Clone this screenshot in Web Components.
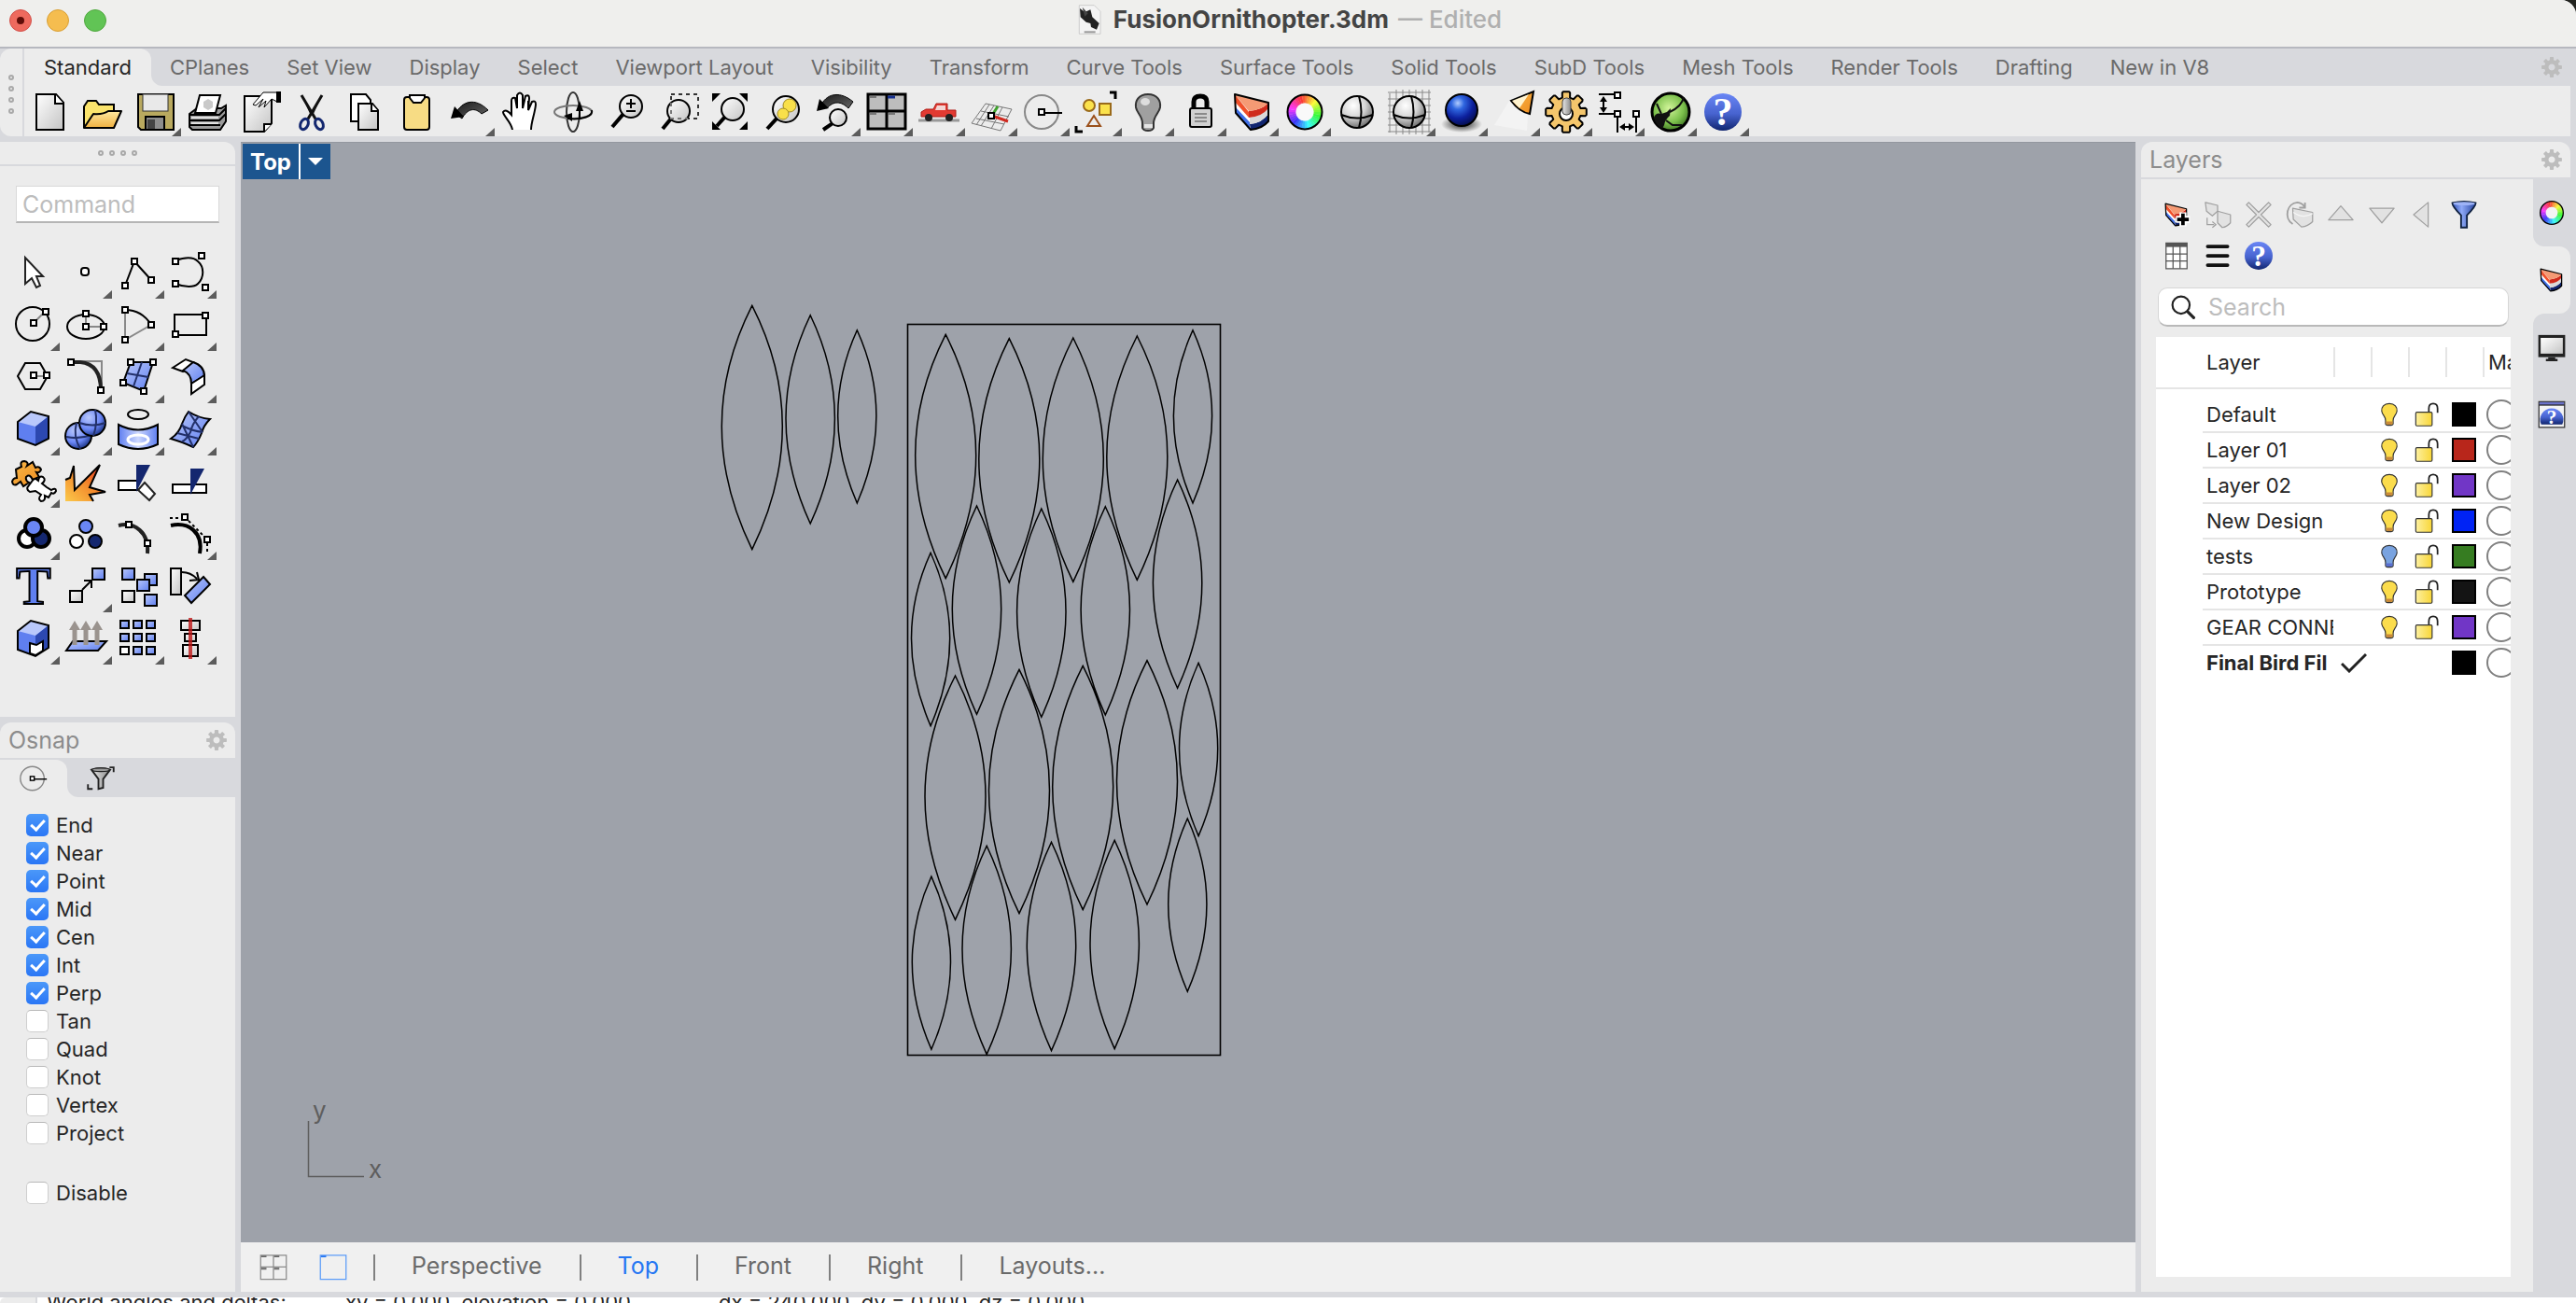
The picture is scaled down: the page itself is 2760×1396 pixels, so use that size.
<!DOCTYPE html>
<html lang="en">
<head>
<meta charset="utf-8">
<title>FusionOrnithopter.3dm</title>
<style>
    html, body {
        height: 100%;
        margin: 0;
        background: #22231f;
    }

    body {
        --chrome: #d8d9dd;
        --panel: #ececec;
        --text: #262626;
        --muted: #6a6a6a;
        --accent: #2476f3;
        font-family: Inter, "Liberation Sans", sans-serif;
        font-size: 22px;
        color: var(--text);
    }
</style>
</head>
<body>
<rhino-app></rhino-app>

<script>
// Gradients shared by all icons. Ids stay local to each shadow root.
const ICON_DEFS = `
    <defs>
        <linearGradient id="silver" x1="0" y1="0" x2="1" y2="1"><stop offset="0" stop-color="#fff"/><stop offset="1" stop-color="#c4c4c4"/></linearGradient>
        <linearGradient id="steel" x1="0" y1="0" x2="1" y2="0"><stop offset="0" stop-color="#e8e8e8"/><stop offset="1" stop-color="#8a8a8a"/></linearGradient>
        <linearGradient id="gold" x1="0" y1="0" x2="0" y2="1"><stop offset="0" stop-color="#ffe9a0"/><stop offset="1" stop-color="#efb040"/></linearGradient>
        <linearGradient id="lockGold" x1="0" y1="0" x2="1" y2="0"><stop offset="0" stop-color="#fdf0a0"/><stop offset="1" stop-color="#f8d637"/></linearGradient>
        <linearGradient id="blue" x1="0" y1="0" x2="1" y2="1"><stop offset="0" stop-color="#b9c8fb"/><stop offset="1" stop-color="#5f7ff0"/></linearGradient>
        <linearGradient id="deep" x1="0" y1="0" x2="0" y2="1"><stop offset="0" stop-color="#6a86f5"/><stop offset=".55" stop-color="#4763cf"/><stop offset="1" stop-color="#10256f"/></linearGradient>
        <linearGradient id="band" x1="0" y1="0" x2="1" y2="0"><stop offset="0" stop-color="#5f7ff0"/><stop offset=".5" stop-color="#cdd8ff"/><stop offset="1" stop-color="#5f7ff0"/></linearGradient>
        <linearGradient id="fire" x1="0" y1="1" x2="1" y2="0"><stop offset="0" stop-color="#fbc94a"/><stop offset=".5" stop-color="#f48a2c"/><stop offset="1" stop-color="#e8261c"/></linearGradient>
        <linearGradient id="orange" x1="0" y1="0" x2="1" y2="1"><stop offset="0" stop-color="#f7b84a"/><stop offset="1" stop-color="#f08c1e"/></linearGradient>
        <linearGradient id="arrow" x1="1" y1="1" x2="0" y2="0"><stop offset="0" stop-color="#666"/><stop offset="1" stop-color="#1a1a1a"/></linearGradient>
        <linearGradient id="funnel" x1="0" y1="0" x2="1" y2="0"><stop offset="0" stop-color="#2d4fb5"/><stop offset=".4" stop-color="#8ea9f7"/><stop offset="1" stop-color="#2543a0"/></linearGradient>
        <radialGradient id="ball" cx=".38" cy=".3" r=".75"><stop offset="0" stop-color="#fff"/><stop offset=".5" stop-color="#d5d5d5"/><stop offset="1" stop-color="#666"/></radialGradient>
        <radialGradient id="blueBall" cx=".36" cy=".3" r=".75"><stop offset="0" stop-color="#b9c8fb"/><stop offset=".6" stop-color="#6a86f5"/><stop offset="1" stop-color="#17307f"/></radialGradient>
        <radialGradient id="navyBall" cx=".38" cy=".28" r=".8"><stop offset="0" stop-color="#b0ccff"/><stop offset=".25" stop-color="#2f66e0"/><stop offset=".6" stop-color="#0c1f9c"/><stop offset="1" stop-color="#04093a"/></radialGradient>
        <radialGradient id="greenBall" cx=".45" cy=".4" r=".65"><stop offset="0" stop-color="#d2f59a"/><stop offset=".6" stop-color="#7cc04c"/><stop offset="1" stop-color="#356a1c"/></radialGradient>
        <radialGradient id="shadow"><stop offset="0" stop-color="#222"/><stop offset="1" stop-color="#222" stop-opacity="0"/></radialGradient>
    </defs>`;

const node = (x, y) => `<rect x="${x - 3}" y="${y - 3}" width="6" height="6" fill="#fff" stroke="#000" stroke-width="2"/>`;
const box = (x, y, w, h, fill) => `<rect x="${x}" y="${y}" width="${w}" height="${h}" fill="${fill}" stroke="#000" stroke-width="2"/>`;
const lens = (x, y, r, hx, hy) => `
    <path d="M${x - r * 0.7} ${y + r * 0.7}L${hx} ${hy}" stroke="#000" stroke-width="4"/>
    <circle cx="${x}" cy="${y}" r="${r}" fill="url(#silver)" stroke="#000" stroke-width="2"/>`;

// Hue ring drawn as short arcs
function ring(c, r, w) {
    let out = '';
    for (let i = 0; i < 36; i++) {
        const a = (i * 10 - 90) * Math.PI / 180;
        const b = (i * 10 - 79) * Math.PI / 180;
        const p = t => `${(c + r * Math.cos(t)).toFixed(2)} ${(c + r * Math.sin(t)).toFixed(2)}`;
        out += `<path d="M${p(a)}A${r} ${r} 0 0 1 ${p(b)}" stroke="hsl(${i * 10 + 20} 95% 60%)" stroke-width="${w}" fill="none"/>`;
    }
    return out + `<circle cx="${c}" cy="${c}" r="${r - w / 2}" fill="#fff" opacity=".7"/><circle cx="${c}" cy="${c}" r="${r + w / 2}" fill="none" stroke="#000" stroke-width="2"/>`;
}

const CAKE = `
    <path d="M5 5L6 25L22 43L41 34V14Z" fill="#fff"/>
    <path d="M5 18L21 35V43L6 25Z" fill="#3f6fe6"/>
    <path d="M21 37Q34 36 41 26V34Q34 42 22 43Z" fill="#10256f"/>
    <path d="M21 30Q34 28 41 20V26Q34 36 21 37Z" fill="#d9d9d9"/>
    <path d="M5 5V13L20 30V24Z" fill="#f0502a"/>
    <path d="M20 23Q34 22 41 14V20Q34 29 20 30Z" fill="#cf2b1c"/>
    <path d="M5 5L41 14Q34 22 20 23Z" fill="#f59a74"/>
    <path d="M5 5L6 25L22 43Q34 42 41 34V14Z" fill="none" stroke="#000" stroke-width="2" stroke-linejoin="round"/>`;
const QUESTION = (x, y, size) => `<text x="${x}" y="${y}" font-family="Liberation Serif, serif" font-weight="bold" font-size="${size}" text-anchor="middle" fill="#fff">?</text>`;
const GEAR_PATH = (() => {
    let d = '';
    for (let i = 0; i < 8; i++) {
        [[-0.26, 0.72], [-0.2, 0.95], [-0.14, 1], [0.14, 1], [0.2, 0.95], [0.26, 0.72]].forEach(([o, r]) => {
            const t = i * Math.PI / 4 + o;
            d += `${d ? 'L' : 'M'}${(24 + 22 * r * Math.sin(t)).toFixed(1)} ${(24 - 22 * r * Math.cos(t)).toFixed(1)}`;
        });
    }
    return d + 'Z';
})();
const BULB = (fill, base) => `
    <path d="M24 4C14 4 9 11 10 18C11 25 17 27 17 35V41Q17 44 24 44Q31 44 31 41V35C31 27 37 25 38 18C39 11 34 4 24 4Z" fill="${fill}" stroke="#333" stroke-width="2"/>
    <path d="M18 37H30V41Q29 43 24 43Q19 43 18 41Z" fill="${base}"/>`;
const GHOST = 'fill="#e2e2e2" stroke="#a0a0a0" stroke-width="2" stroke-linejoin="round"';

const ICONS = {
    // Standard toolbar
    new: `<path d="M9 5H30L38 14V43H9Z" fill="url(#silver)" stroke="#000" stroke-width="2"/><path d="M29 5V15H38" fill="#fff" stroke="#000" stroke-width="2"/>`,
    open: `<path d="M4 41V18L8 12H17L20 16H36V23" fill="#fbe46d" stroke="#000" stroke-width="2"/><path d="M4 41L14 26Q24 27 30 23H44L36 41Z" fill="url(#gold)" stroke="#000" stroke-width="2" stroke-linejoin="round"/>`,
    save: `<path d="M6 5H44V43H9L6 40Z" fill="#b9a95f" stroke="#000" stroke-width="2"/><rect x="11" y="5" width="27" height="18" fill="#e9e9e9" stroke="#333"/><rect x="14" y="29" width="20" height="14" fill="#8d8d8d" stroke="#000" stroke-width="2"/><rect x="16" y="32" width="8" height="10" fill="#444"/>`,
    print: `<path d="M5 26L13 20H39L44 17V34L38 43H8L5 40Z" fill="#9b9b9b" stroke="#000" stroke-width="2"/><path d="M16 6H38L33 25H11Z" fill="#fff" stroke="#000" stroke-width="2"/><path d="M20 13l5-3 5 3v6l-5 3-5-3z" fill="#c9c9c9"/><path d="M5 27H37L44 20M5 33H37L44 26M5 38H38" fill="none" stroke="#000" stroke-width="2"/><path d="M7 30H36M7 36H36" stroke="#e0e0e0" stroke-width="2"/>`,
    props: `<path d="M8 7H37V36L29 45H8Z" fill="url(#silver)" stroke="#000" stroke-width="2"/><path d="M29 45V37H37" fill="#fff" stroke="#000" stroke-width="2"/><path d="M43 3H28L17 16L20 17L28 10L23 19L31 12L29 19L37 10L43 13Z" fill="#fff" stroke="#000"/><path d="M42 2h5v12h-5z" fill="#000"/>`,
    cut: `<path d="M13 6L29 33M35 6L19 33" stroke="#111" stroke-width="3"/><path d="M13 6L25 25L23 28ZM35 6L23 25L25 28Z" fill="#111"/><ellipse cx="16" cy="37" rx="4" ry="6" transform="rotate(25 16 37)" fill="none" stroke="#13276f" stroke-width="3"/><ellipse cx="32" cy="37" rx="4" ry="6" transform="rotate(-25 32 37)" fill="none" stroke="#13276f" stroke-width="3"/>`,
    copy: `<path d="M10 5H26L31 11V34H10Z" fill="#fff" stroke="#000" stroke-width="2"/><path d="M18 15H33L39 22V43H18Z" fill="url(#silver)" stroke="#000" stroke-width="2"/><path d="M32 15V23H39" fill="#fff" stroke="#000" stroke-width="2"/>`,
    paste: `<rect x="11" y="8" width="27" height="35" rx="3" fill="#f7dc84" stroke="#000" stroke-width="2"/><path d="M17 6H33V9L29 14H21L17 9Z" fill="#fff" stroke="#000" stroke-width="2"/>`,
    undo: `<path d="M10 26C17 12 31 8 45 22L38 26C31 19 23 20 17 31Z" fill="url(#arrow)" stroke="#000"/><path d="M9 18L5 31L19 29Z" fill="#000"/>`,
    pan: `<path d="M15 43C14 35 5 28 5 24Q8 20 14 27V12Q14 8 18 9L20 20V6Q23 1 26 6V20L29 7Q33 5 33 9L32 22L36 13Q40 11 40 16C39 26 35 35 35 43" fill="#fff" stroke="#000" stroke-width="2"/><path d="M20 20V9M26 20V8M32 22V12" stroke="#000" stroke-width="2"/>`,
    rotate: `<ellipse cx="24" cy="24" rx="7" ry="21" fill="none" stroke="#333" stroke-width="2"/><ellipse cx="24" cy="24" rx="20" ry="7" fill="none" stroke="#777" stroke-width="2"/><path d="M18 31C34 33 46 28 44 22" fill="none" stroke="#000" stroke-width="2"/><path d="M31 32V20" stroke="#000" stroke-width="2"/><path d="M31 12L27 23H35ZM14 28L23 25V34Z" fill="#000"/>`,
    zoom: `${lens(30, 18, 12, 10, 40)}<path d="M30 10v10M25 15h10M25 23h10" stroke="#000" stroke-width="2"/>`,
    zoomwin: `<rect x="17" y="5" width="29" height="26" fill="none" stroke="#333" stroke-width="2" stroke-dasharray="4 4"/>${lens(25, 23, 12, 8, 42)}<path d="M17 14V31H35" fill="none" stroke="#777" stroke-width="2" stroke-dasharray="4 4"/>`,
    extents: `<path d="M5 4h9L5 13zM43 4v9L34 4zM5 43v-9l9 9zM43 43h-9l9-9z" fill="#000"/>${lens(27, 21, 12, 10, 39)}`,
    selected: `${lens(28, 21, 14, 8, 42)}<circle cx="32" cy="17" r="7" fill="#f9e04a" stroke="#a08a20"/><circle cx="25" cy="26" r="6" fill="#f9e04a" stroke="#a08a20"/>`,
    undoview: `<path d="M10 16C17 3 31 2 44 13L39 20C31 12 23 12 16 20Z" fill="url(#arrow)" stroke="#000"/><path d="M8 10L5 23L18 20Z" fill="#000"/>${lens(28, 30, 9, 12, 43)}`,
    fourview: `<rect x="4" y="5" width="40" height="37" fill="#bdbdbd" stroke="#000" stroke-width="3"/><path d="M24 5V42M4 23H44" stroke="#000" stroke-width="3"/><path d="M25 8h8" stroke="#17308f" stroke-width="3"/><path d="M6 8h7M6 26h7M26 26h7" stroke="#777" stroke-width="2"/>`,
    car: `<path d="M2 33H46" stroke="#999" stroke-width="3"/><path d="M5 29V24L10 21H18L21 15H33V22H42V29Z" fill="#e23a32" stroke="#b01c16"/><path d="M22 17h9v5H20z" fill="#f3d5d3"/><circle cx="13" cy="30" r="4" fill="#222"/><circle cx="35" cy="30" r="4" fill="#222"/>`,
    cplane: `<path d="M18 15L46 21M13 23L43 29M8 31L38 37M3 36L34 44M18 15L3 36M27 17L13 39M36 19L24 42M46 21L34 44M22 16L8 38" fill="none" stroke="#777"/><path d="M25 28L42 34" stroke="#d02a20" stroke-width="3"/><path d="M26 26L31 18" stroke="#3fa22d" stroke-width="3"/>${node(24, 28)}`,
    osnap: `<circle cx="22" cy="24" r="18" fill="none" stroke="#888" stroke-width="2"/><path d="M24 25H44" stroke="#000" stroke-width="2"/>${node(22, 24)}`,
    select: `<path d="M39 3h6v7M3 39v6h7" fill="none" stroke="#000" stroke-width="3"/><circle cx="17" cy="17" r="6" fill="#fbe24c" stroke="#9a6a1a" stroke-width="2"/><rect x="28" y="15" width="12" height="12" fill="#fbe24c" stroke="#9a6a1a" stroke-width="2"/><path d="M22 28L29 39H15Z" fill="none" stroke="#9a4f1a" stroke-width="2"/>`,
    bulb: `<path d="M24 5C14 5 10 12 11 19C12 25 18 28 18 36V41Q19 44 24 44Q29 44 30 41V36C30 28 36 25 37 19C38 12 34 5 24 5Z" fill="#a0a0a0" stroke="#333" stroke-width="2"/><ellipse cx="21" cy="13" rx="5" ry="4" fill="#ddd"/><path d="M20 37h9v4h-9z" fill="#e5e5e5"/>`,
    lock: `<path d="M17 21V13Q17 7 24 7Q31 7 31 13V21" fill="none" stroke="#000" stroke-width="5"/><rect x="13" y="20" width="23" height="20" rx="2" fill="#d0d0d0" stroke="#000" stroke-width="2"/><path d="M18 26H31M18 30H31M18 34H31" stroke="#8a8a8a" stroke-width="2"/>`,
    layers: CAKE,
    color: ring(24, 14, 9),
    shaded: `<circle cx="24" cy="24" r="17" fill="url(#ball)" stroke="#000" stroke-width="2"/><path d="M26 7Q31 24 26 41M7 27Q24 34 41 27" fill="none" stroke="#000" stroke-width="2"/>`,
    wires: `<path d="M3 4V46M10 0V48M17 0V48M24 0V48M31 0V48M38 0V48M45 0V46M1 3H47M1 10H47M1 17H47M1 24H47M1 31H47M1 38H47M1 45H47" stroke="#888"/><circle cx="24" cy="24" r="17" fill="url(#ball)" stroke="#000" stroke-width="2"/><path d="M26 7Q31 24 26 41M7 27Q24 34 41 27" fill="none" stroke="#000" stroke-width="2"/>`,
    render: `<ellipse cx="24" cy="37" rx="22" ry="9" fill="url(#shadow)"/><circle cx="24" cy="22" r="17" fill="url(#navyBall)" stroke="#000" stroke-width="2"/>`,
    spot: `<path d="M21 9L3 38L38 44L39 27Z" fill="#f6f6f6" opacity=".7"/><path d="M21 12L45 2L41 26Q30 24 21 12Z" fill="url(#orange)" stroke="#000" stroke-width="2"/><path d="M22 12L40 5L30 20Z" fill="#fff3cf"/>`,
    gear: `<path d="${GEAR_PATH}" fill="#f4c66c" stroke="#000" stroke-width="2" stroke-linejoin="round"/><circle cx="24" cy="26" r="7" fill="#fff" stroke="#000" stroke-width="2"/><rect x="20" y="9" width="9" height="18" rx="4" fill="url(#steel)" stroke="#444"/>`,
    dim: `<path d="M3 5H23M3 26H23M23 26V46M43 26V46" stroke="#000" stroke-width="2"/><path d="M8 9V23M27 40H39" stroke="#000" stroke-width="2"/><path d="M8 7l-4 6h8zM8 25l-4-6h8zM25 40l6-4v8zM41 40l-6-4v8z" fill="#000"/>${node(23, 6)}${node(23, 26)}${node(43, 26)}`,
    hopper: `<circle cx="24" cy="24" r="20" fill="url(#greenBall)" stroke="#000" stroke-width="3"/><path d="M6 30Q8 24 14 26L20 24L24 20L23 28Q18 32 17 38L15 42Q8 38 6 30Z" fill="#111"/><path d="M23 24Q36 18 38 8M14 26L9 15M19 33L26 38L36 38" fill="none" stroke="#111" stroke-width="2"/>`,
    help: `<circle cx="24" cy="24" r="20" fill="url(#deep)"/>${QUESTION(24, 38, 42)}`,

    // Tool palette
    pointer: `<path d="M15 8V36L22 30L27 40L31 38L27 28H34Z" fill="#fff" stroke="#222" stroke-width="2"/>`,
    point: `<rect x="19" y="19" width="8" height="8" rx="3" fill="#fff" stroke="#000" stroke-width="2"/>`,
    polyline: `<path d="M10 38L20 12L38 32" fill="none" stroke="#000" stroke-width="2"/>${node(10, 38)}${node(20, 12)}${node(38, 32)}`,
    curve: `<path d="M8 11C20 7 28 8 32 12C39 18 39 29 32 36C28 40 18 40 8 36" fill="none" stroke="#000" stroke-width="2"/>${node(8, 12)}${node(36, 6)}${node(40, 40)}${node(8, 36)}`,
    circle: `<circle cx="23" cy="23" r="18" fill="none" stroke="#000" stroke-width="2"/><path d="M24 22L36 10" stroke="#888" stroke-width="2"/>${node(24, 22)}${node(37, 10)}`,
    ellipse: `<ellipse cx="24" cy="26" rx="20" ry="13" fill="none" stroke="#000" stroke-width="2"/><path d="M24 14V26H42" fill="none" stroke="#888" stroke-width="2"/>${node(24, 12)}${node(24, 26)}${node(43, 26)}`,
    arc: `<path d="M10 8V40L38 24" fill="none" stroke="#888" stroke-width="2"/><path d="M10 8Q28 8 38 24" fill="none" stroke="#000" stroke-width="2"/>${node(10, 8)}${node(38, 24)}${node(10, 40)}`,
    rect: `<rect x="7" y="13" width="34" height="22" fill="none" stroke="#000" stroke-width="2"/>${node(40, 14)}${node(8, 34)}`,
    polygon: `<path d="M7 23L15 9H31L39 23L31 37H15Z" fill="none" stroke="#000" stroke-width="2"/><path d="M24 23H38" stroke="#888" stroke-width="2"/>${node(24, 22)}${node(38, 22)}`,
    fillet: `<path d="M8 7H41V38" fill="none" stroke="#888" stroke-width="2"/><path d="M8 8H18Q40 10 40 38" fill="none" stroke="#222" stroke-width="4"/>${node(8, 8)}${node(40, 38)}`,
    surface: `<path d="M16 8H40L30 39L8 30Z" fill="url(#blue)" stroke="#000" stroke-width="2"/><path d="M28 8L19 34M12 20L35 24" stroke="#22306a" stroke-width="2"/>${node(16, 8)}${node(40, 8)}${node(8, 30)}${node(30, 39)}`,
    revolve: `<path d="M5 14L19 5L27 8L16 18Z" fill="#fff" stroke="#000" stroke-width="2"/><path d="M16 17L27 8Q39 12 39 23L25 31Q25 20 16 17Z" fill="url(#blue)" stroke="#000" stroke-width="2"/><path d="M25 31L39 22V32L25 42Z" fill="#fff" stroke="#000" stroke-width="2"/>`,
    cube: `<path d="M7 16L21 5L40 10V34L26 41L7 34Z" fill="#5f7ff0"/><path d="M7 16L21 5L40 10L26 21Z" fill="#b9c8fb"/><path d="M26 21L40 10V34L26 41Z" fill="#2c48b0"/><path d="M7 16L21 5L40 10V34L26 41L7 34Z" fill="none" stroke="#000" stroke-width="2"/>`,
    spheres: `<circle cx="16" cy="31" r="14" fill="url(#blueBall)" stroke="#000" stroke-width="2"/><path d="M14 17Q10 31 18 45M3 32Q16 35 30 30" fill="none" stroke="#22306a" stroke-width="2"/><circle cx="31" cy="17" r="14" fill="url(#blueBall)" stroke="#000" stroke-width="2"/><path d="M34 3Q37 17 32 31M17 17Q31 22 45 17" fill="none" stroke="#22306a" stroke-width="2"/>`,
    project: `<ellipse cx="24" cy="8" rx="11" ry="5" fill="none" stroke="#000" stroke-width="2"/><path d="M3 19Q24 30 45 19V40Q24 50 3 40Z" fill="url(#band)" stroke="#000" stroke-width="2"/><ellipse cx="24" cy="35" rx="11" ry="5" fill="none" stroke="#fff" stroke-width="3"/>`,
    mesh: `<path d="M22 5Q33 12 45 13Q38 20 36 28Q32 38 27 43Q14 37 3 34Q12 28 15 18Q18 10 22 5Z" fill="url(#blue)" stroke="#000" stroke-width="2"/><path d="M33 10Q26 18 24 27Q19 36 15 37M15 20Q27 26 37 27M22 5L37 27M15 18L27 43M10 28L33 34" fill="none" stroke="#22306a" stroke-width="2"/>`,
    puzzle: `<path d="M19 28L25 20L29 23Q30 17 34 19Q38 22 33 26L38 30L43 33Q48 30 48 34Q46 38 43 36L40 41L36 39Q37 45 32 45Q28 43 32 38L26 34L20 35Q15 32 19 28Z" fill="#fff" stroke="#000" stroke-width="2"/><path d="M5 11L11 8Q9 2 14 2Q19 3 17 7L23 3L26 9Q30 7 32 11Q31 15 27 14L30 19L23 22Q20 15 16 19Q15 23 19 25L13 29L10 24L6 27Q2 29 1 24Q2 20 6 20Z" fill="url(#orange)" stroke="#000" stroke-width="2"/>`,
    explode: `<path d="M2 22L7 20L11 7L12 33L39 6L28 30L45 35L28 38L32 45H2Z" fill="url(#fire)"/><path d="M2 22L7 20L11 7L12 33L39 6L28 30L45 35L28 38L32 45" fill="none" stroke="#000" stroke-width="2"/>`,
    trim: `${box(3, 23, 20, 10, '#fff')}<path d="M22 6H37L22 35Z" fill="#14276f"/><path d="M31 25L42 37L36 44L24 33Z" fill="#fff" stroke="#222" stroke-width="2"/>`,
    split: `${box(5, 27, 36, 9, '#fff')}<path d="M24 10H39L24 38Z" fill="#14276f"/>`,
    join: `<g stroke="#000" stroke-width="4"><circle cx="17" cy="29" r="9" fill="#fff"/><circle cx="32" cy="29" r="9" fill="#14276f"/><circle cx="24" cy="17" r="9" fill="#6a86f5"/></g>`,
    group: `<g stroke="#000" stroke-width="2"><circle cx="14" cy="32" r="7" fill="#fff"/><circle cx="34" cy="32" r="7" fill="#14276f"/><circle cx="24" cy="16" r="7" fill="#6a86f5"/></g>`,
    editpts: `<path d="M3 15C20 11 36 22 34 45" fill="none" stroke="#222" stroke-width="4"/>${node(14, 14)}${node(34, 34)}`,
    ctrlpts: `<path d="M3 15C22 11 38 22 34 45" fill="none" stroke="#000" stroke-width="4"/><path d="M2 7H16M22 10L42 30M42 34V46" stroke="#000" stroke-width="2" stroke-dasharray="3 3"/>${node(18, 6)}${node(42, 30)}`,
    text: `<text x="24" y="43" text-anchor="middle" font-family="Liberation Serif, serif" font-weight="bold" font-size="56" fill="#5f7ff0" stroke="#000" stroke-width="2">T</text>`,
    move: `${box(7, 29, 13, 12, 'url(#silver)')}${box(31, 5, 13, 12, 'url(#blue)')}<path d="M20 28L30 18M22 18H30V26" fill="none" stroke="#000" stroke-width="2"/>`,
    copies: `${box(7, 5, 13, 12, 'url(#blue)')}${box(7, 29, 13, 12, 'url(#silver)')}${box(31, 11, 13, 12, 'url(#blue)')}${box(23, 17, 13, 12, 'url(#blue)')}${box(31, 33, 13, 12, 'url(#blue)')}`,
    turn: `${box(3, 5, 11, 28, 'url(#silver)')}<path d="M15 9Q24 9 31 16M23 18L33 17L31 9" fill="none" stroke="#000" stroke-width="2"/><path d="M38 14L45 22L25 42L18 34Z" fill="url(#blue)" stroke="#000" stroke-width="2"/>`,
    boolean: `<path d="M7 16L21 5L40 10V34L26 43L7 36Z" fill="#5f7ff0"/><path d="M7 16L21 5L40 10L26 21Z" fill="#b9c8fb"/><path d="M26 21L40 10V34L34 37V27L26 30Z" fill="#2c48b0"/><path d="M20 29L27 31L34 27V37L26 42L20 40Z" fill="#fff" stroke="#000" stroke-width="2"/><path d="M7 16L21 5L40 10V34L26 43L7 36Z" fill="none" stroke="#000" stroke-width="2"/>`,
    extrude: `<path d="M10 27H46L37 37H3Z" fill="url(#blue)" stroke="#000" stroke-width="2"/><path d="M12 31V14M24 31V14M36 31V14" stroke="#9a938e" stroke-width="5"/><path d="M12 5L6 15H18ZM24 5L18 15H30ZM36 5L30 15H42Z" fill="#9a938e"/>`,
    array: [5, 19, 33].map(y => [5, 19, 33].map(x => box(x, y, 9, 8, x === 5 && y === 33 ? '#fff' : 'url(#blue)')).join('')).join(''),
    align: `${box(14, 5, 20, 10, 'url(#silver)')}${box(18, 19, 12, 8, 'url(#silver)')}${box(16, 31, 16, 12, 'url(#silver)')}<path d="M24 2V46" stroke="#c01818" stroke-width="4" opacity=".8"/>`,

    // Panels
    cog: `<path d="${GEAR_PATH}M24 17a7 7 0 1 0 0.1 0Z" fill="#bdbdbd" fill-rule="evenodd"/>`,
    filter: `<path d="M39 5h7v8M2 34v8h8" fill="none" stroke="#222" stroke-width="3"/><path d="M8 9Q24 4 40 9L28 25V40L20 42V25Z" fill="url(#steel)" stroke="#222" stroke-width="3"/><ellipse cx="24" cy="9" rx="15" ry="3" fill="#999" stroke="#222" stroke-width="2"/>`,
    newlayer: `${CAKE}<path d="M35 20v24M23 32h24" stroke="#fff" stroke-width="12"/><path d="M35 22v20M25 32h20" stroke="#000" stroke-width="6"/>`,
    sublayer: `<path d="M3 3L24 8V18L15 26L5 18Z" ${GHOST}/><path d="M24 18L46 24V38Q40 45 32 46L24 38Z" ${GHOST}/><path d="M6 29V41H18M15 36l6 5-6 5" fill="none" stroke="#a0a0a0" stroke-width="2"/>`,
    remove: `<path d="M7 3L24 20L41 3L45 7L28 24L45 41L41 45L24 28L7 45L3 41L20 24L3 7Z" ${GHOST}/>`,
    duplicate: `<path d="M12 40C-4 30 2 4 20 3Q28 4 32 10M33 3V12H23" fill="none" stroke="#a0a0a0" stroke-width="3"/><path d="M12 13L46 20V36Q38 44 27 45L13 32Z" ${GHOST}/><path d="M13 20Q30 32 46 22" fill="none" stroke="#f6f6f6" stroke-width="2"/>`,
    up: `<path d="M24 9L45 33H3Z" ${GHOST}/>`,
    down: `<path d="M3 13H45L24 38Z" ${GHOST}/>`,
    left: `<path d="M8 24L33 3V45Z" ${GHOST}/>`,
    funnel: `<path d="M4 4Q24 -1 44 4Q44 10 29 25V46H19V25Q4 10 4 4Z" fill="url(#funnel)" stroke="#0f2140" stroke-width="3"/><ellipse cx="24" cy="5" rx="19" ry="3" fill="#9db3f7"/>`,
    grid: `<path d="M6 2H42V46H6Z" fill="#fff" stroke="#555" stroke-width="2"/><path d="M6 2H42V9H6Z" fill="#555"/><path d="M18 4V46M30 4V46M6 21H42M6 33H42" stroke="#555" stroke-width="2"/>`,
    menu: `<path d="M7 8H41M7 24H41M7 40H41" stroke="#111" stroke-width="6" stroke-linecap="round"/>`,
    display: `<path d="M1 3H47V41H1Z" fill="#222"/><path d="M5 8H43V35H5Z" fill="url(#silver)"/><path d="M18 41H30V44H34V48H14V44H18Z" fill="#222"/>`,
    helpwin: `<path d="M2 2H46V46H2Z" fill="#f3f3f3" stroke="#333" stroke-width="2"/><path d="M3 3H45V8H3Z" fill="#6b72c9"/><path d="M2 8H46" stroke="#222" stroke-width="2"/><path d="M6 41A20 19 0 1 1 42 41Z" fill="url(#deep)"/>${QUESTION(24, 40, 34)}`,
    find: `<circle cx="20" cy="20" r="17" fill="none" stroke="#222" stroke-width="4"/><path d="M33 33L45 45" stroke="#222" stroke-width="6" stroke-linecap="round"/>`,
    lampOn: BULB('#fbdc4c', '#c98a3a'),
    lampOff: BULB('#79a3e0', '#5a6fd0'),
    unlocked: `<path d="M28 21V13Q28 4 36 4Q44 4 44 13V21" fill="none" stroke="#222" stroke-width="3"/><rect x="4" y="20" width="30" height="25" rx="2" fill="url(#lockGold)" stroke="#333" stroke-width="2"/>`,
    quad: `<path d="M2 3H46V44H2ZM24 3V44M2 23H46" fill="none" stroke="#8a8a8a" stroke-width="2"/><path d="M3 5h9M25 5h9M3 26h9M25 26h9" stroke="#666" stroke-width="3"/>`,
    single: `<path d="M2 3H46V44H2Z" fill="none" stroke="#5b9bf8" stroke-width="2"/><path d="M3 5h9" stroke="#2476f3" stroke-width="3"/>`,
    document: `<path d="M8 1H32L42 11V47H8Z" fill="#f4f4f4" stroke="#bbb"/><path d="M9 6L17 12L26 8L29 20L40 30L36 40L27 36L26 30L19 28L10 20Z" fill="#222"/><path d="M13 4L22 14L17 19Z" fill="#444"/><path d="M16 44H34" stroke="#999" stroke-width="3"/>`
};

// One icon by name; its size comes from --size
class RhinoIcon extends HTMLElement {
    connectedCallback() {
        if (!this.shadowRoot) {
            this.attachShadow({ mode: 'open' });
        }
        this.shadowRoot.innerHTML = `
            <style>
                :host { display: block; flex: none; width: var(--size, 48px); height: var(--size, 48px); }
                svg { display: block; width: 100%; height: 100%; overflow: visible; }
            </style>
            <svg viewBox="0 0 48 48" aria-hidden="true">${ICON_DEFS}${ICONS[this.getAttribute('name')] || ''}</svg>
        `;
    }
}

// Square tool button, with a corner mark when it opens a flyout
class ToolButton extends HTMLElement {
    connectedCallback() {
        if (!this.shadowRoot) {
            this.attachShadow({ mode: 'open' });
        }
        const name = this.getAttribute('icon');
        this.shadowRoot.innerHTML = `
            <style>
                :host { display: block; }
                button {
                    position: relative;
                    display: grid;
                    place-items: center;
                    box-sizing: border-box;
                    width: 56px;
                    height: var(--tool-height, 56px);
                    padding: var(--tool-pad, 0) 0 0;
                    border: 0;
                    background: none;
                }
                :host([flyout]) button::after {
                    content: "";
                    position: absolute;
                    right: 0;
                    bottom: 0;
                    width: 10px;
                    height: 9px;
                    background: #5c5c5c;
                    clip-path: polygon(100% 0, 100% 100%, 0 100%);
                }
            </style>
            <button type="button" aria-label="${name}"><rhino-icon name="${name}"></rhino-icon></button>
        `;
    }
}

class TitleBar extends HTMLElement {
    connectedCallback() {
        if (!this.shadowRoot) {
            this.attachShadow({ mode: 'open' });
        }
        this.shadowRoot.innerHTML = `
            <style>
                :host {
                    display: grid;
                    grid-template-columns: 1fr auto 1fr;
                    align-items: center;
                    height: 50px;
                    background: #efefed;
                    border-bottom: 2px solid #b6b8bf;
                    --size: 32px;
                }
                .lights { display: flex; gap: 16px; padding: 0 10px; margin-bottom: 6px; }
                .lights button {
                    display: grid;
                    place-items: center;
                    width: 24px;
                    height: 24px;
                    padding: 0;
                    border: 1px solid #d9a036;
                    border-radius: 50%;
                    background: #f5bd4f;
                }
                .lights .close { background: #ee6a5e; border-color: #d2504a; }
                .lights .close::after { content: ""; width: 8px; height: 8px; border-radius: 50%; background: #5f0d08; }
                .lights .zoom { background: #61c455; border-color: #51a83f; }
                .title { display: flex; align-items: center; gap: 10px; margin-bottom: 8px; font-size: 26px; line-height: 32px; color: #b0b0b0; }
                .title span { font-weight: 500; }
                strong { color: #444; }
            </style>
            <div class="lights">
                <button type="button" class="close" aria-label="Close"></button>
                <button type="button" aria-label="Minimise"></button>
                <button type="button" class="zoom" aria-label="Zoom"></button>
            </div>
            <div class="title"><rhino-icon name="document"></rhino-icon><strong><slot></slot></strong><span>— Edited</span></div>
        `;
    }
}

const TABS = ['Standard', 'CPlanes', 'Set View', 'Display', 'Select', 'Viewport Layout', 'Visibility', 'Transform',
    'Curve Tools', 'Surface Tools', 'Solid Tools', 'SubD Tools', 'Mesh Tools', 'Render Tools', 'Drafting', 'New in V8'];

// A trailing + marks a button with a flyout
const TOOLBAR = ['new', 'open', 'save+', 'print', 'props', 'cut', 'copy', 'paste', 'undo+', 'pan', 'rotate', 'zoom',
    'zoomwin', 'extents', 'selected', 'undoview+', 'fourview+', 'car+', 'cplane+', 'osnap+', 'select+', 'bulb+', 'lock+',
    'layers+', 'color+', 'shaded', 'wires+', 'render+', 'spot+', 'gear+', 'dim+', 'hopper+', 'help+'];

const PALETTE = ['pointer', 'point+', 'polyline+', 'curve+', 'circle+', 'ellipse+', 'arc+', 'rect+',
    'polygon+', 'fillet+', 'surface+', 'revolve+', 'cube+', 'spheres+', 'project+', 'mesh+',
    'puzzle+', 'explode', 'trim', 'split', 'join+', 'group', 'editpts', 'ctrlpts+',
    'text', 'move+', 'copies', 'turn', 'boolean+', 'extrude+', 'array+', 'align+'];

const toolButtons = list => list.map(t => `<tool-button icon="${t.replace('+', '')}"${t.endsWith('+') ? ' flyout' : ''}></tool-button>`).join('');

const GRIP = `
    .grip { display: flex; gap: 6px; align-items: center; justify-content: center; }
    .grip i { width: 6px; height: 6px; box-sizing: border-box; border: 2px solid #a9a9a9; border-radius: 50%; }`;

class TabbedToolbar extends HTMLElement {
    connectedCallback() {
        if (!this.shadowRoot) {
            this.attachShadow({ mode: 'open' });
        }
        const [first, ...others] = TABS;
        this.shadowRoot.innerHTML = `
            <style>
                :host { display: flex; margin-right: 6px; }
                ${GRIP}
                .grip { flex-direction: column; width: 26px; padding-top: 4px; box-sizing: border-box; border-radius: 12px 0 0 12px; background: var(--panel); border-right: 2px solid var(--chrome); }
                .main { flex: 1; min-width: 0; background: var(--panel); }
                nav { display: flex; height: 40px; }
                .on { background: var(--chrome); display: flex; }
                .rest { flex: 1; display: flex; align-items: center; background: var(--chrome); border-bottom-left-radius: 12px; --size: 24px; }
                button { padding: 0 20px; border: 0; background: none; font: inherit; color: var(--muted); white-space: nowrap; }
                .on button { padding: 0 21px; background: var(--panel); color: var(--text); border-top-right-radius: 12px; }
                .rest .cog { margin-left: auto; padding: 0 8px; }
                .tools { display: flex; --tool-height: 54px; --tool-pad: 2px; }
            </style>
            <div class="grip"><i></i><i></i><i></i><i></i></div>
            <div class="main">
                <nav>
                    <div class="on"><button type="button">${first}</button></div>
                    <div class="rest">
                        ${others.map(t => `<button type="button">${t}</button>`).join('')}
                        <button type="button" class="cog" aria-label="Toolbar options"><rhino-icon name="cog"></rhino-icon></button>
                    </div>
                </nav>
                <div class="tools">${toolButtons(TOOLBAR)}</div>
            </div>
        `;
    }
}

class ToolPalette extends HTMLElement {
    connectedCallback() {
        if (!this.shadowRoot) {
            this.attachShadow({ mode: 'open' });
        }
        this.shadowRoot.innerHTML = `
            <style>
                :host { display: block; background: var(--panel); border-top-right-radius: 12px; padding-bottom: 56px; }
                ${GRIP}
                .grip { height: 24px; border-bottom: 2px solid var(--chrome); }
                input {
                    display: block;
                    box-sizing: border-box;
                    width: calc(100% - 34px);
                    height: 40px;
                    margin: 21px 17px 25px;
                    padding: 0 6px;
                    border: 1px solid #d9d9d9;
                    border-bottom: 2px solid #b5b5b5;
                    background: #fff;
                    font: inherit;
                    font-size: 25px;
                }
                input::placeholder { color: #bdbdbd; }
                .tools { display: grid; grid-template-columns: repeat(4, 56px); padding-left: 8px; }
            </style>
            <div class="grip"><i></i><i></i><i></i><i></i></div>
            <input type="text" placeholder="Command" aria-label="Command">
            <div class="tools">${toolButtons(PALETTE)}</div>
        `;
    }
}

// Panel title with its options cog
class PanelHeader extends HTMLElement {
    connectedCallback() {
        if (!this.shadowRoot) {
            this.attachShadow({ mode: 'open' });
        }
        this.shadowRoot.innerHTML = `
            <style>
                :host {
                    display: flex;
                    align-items: center;
                    justify-content: space-between;
                    height: 38px;
                    padding: 0 8px 0 9px;
                    border-bottom: 2px solid var(--chrome);
                    border-radius: 12px 12px 0 0;
                    background: var(--panel);
                    font-size: 25px;
                    color: #8c8c8c;
                    --size: 24px;
                }
                button { padding: 0; border: 0; background: none; }
            </style>
            <slot></slot>
            <button type="button" aria-label="Panel options"><rhino-icon name="cog"></rhino-icon></button>
        `;
    }
}

class SnapOption extends HTMLElement {
    connectedCallback() {
        if (!this.shadowRoot) {
            this.attachShadow({ mode: 'open' });
        }
        this.shadowRoot.innerHTML = `
            <style>
                :host { display: block; height: 30px; }
                label { display: flex; align-items: center; gap: 8px; height: 100%; }
                input {
                    appearance: none;
                    display: grid;
                    place-items: center;
                    box-sizing: border-box;
                    width: 24px;
                    height: 24px;
                    margin: 0;
                    border: 1px solid #cfcfcf;
                    border-top-color: #b9b9b9;
                    border-radius: 5px;
                    background: #fff;
                }
                input:checked { border: 0; background: linear-gradient(#4b98f9, #2a76f5); }
                input:checked::after {
                    content: "";
                    width: 6px;
                    height: 12px;
                    margin-bottom: 3px;
                    border: solid #fff;
                    border-width: 0 3px 3px 0;
                    transform: rotate(42deg);
                }
            </style>
            <label><input type="checkbox" ${this.hasAttribute('checked') ? 'checked' : ''}><span>${this.getAttribute('label')}</span></label>
        `;
    }
}

class OsnapPanel extends HTMLElement {
    connectedCallback() {
        if (!this.shadowRoot) {
            this.attachShadow({ mode: 'open' });
        }
        const on = ['End', 'Near', 'Point', 'Mid', 'Cen', 'Int', 'Perp'];
        const off = ['Tan', 'Quad', 'Knot', 'Vertex', 'Project'];
        this.shadowRoot.innerHTML = `
            <style>
                :host { display: block; flex: 1; background: linear-gradient(var(--chrome) 20px, var(--panel) 20px); }
                nav { display: flex; height: 40px; --size: 34px; }
                button { display: grid; place-items: center; width: 72px; padding: 0; border: 0; background: none; }
                .on { background: var(--chrome); display: flex; }
                .on button { background: var(--panel); border-top-right-radius: 12px; }
                .rest { flex: 1; display: flex; background: var(--chrome); border-bottom-left-radius: 12px; --size: 30px; }
                .options { padding: 15px 0 0 28px; }
                .last { margin-top: 34px; }
            </style>
            <panel-header>Osnap</panel-header>
            <nav>
                <div class="on"><button type="button" aria-label="Object snaps"><rhino-icon name="osnap"></rhino-icon></button></div>
                <div class="rest"><button type="button" aria-label="Selection filter"><rhino-icon name="filter"></rhino-icon></button></div>
            </nav>
            <div class="options">
                ${on.map(l => `<snap-option label="${l}" checked></snap-option>`).join('')}
                ${off.map(l => `<snap-option label="${l}"></snap-option>`).join('')}
                <snap-option class="last" label="Disable"></snap-option>
            </div>
        `;
    }
}

// Feather outlines: height and half width per size, then the tip of each copy
const FEATHERS = [
    { h: 261.3, w: 32.5, tips: [[547.8, 175.3], [755.2, 206.3], [823.3, 210.7], [891.8, 210], [960.3, 208], [765.5, 572], [834, 565.3], [902.2, 561.3], [971, 555.7]] },
    { h: 223.3, w: 26.2, tips: [[610.2, 185.7], [788.5, 390], [857.8, 393], [926.3, 390.7], [1003.6, 362], [799.2, 754.3], [868.5, 750.3], [936.2, 748.3]] },
    { h: 185.3, w: 20.6, tips: [[660.3, 201.7], [1020, 201.7], [739.1, 440.3], [1026.1, 558.3], [1014.3, 725], [739.9, 787]] }
];

class ModelViewport extends HTMLElement {
    connectedCallback() {
        if (!this.shadowRoot) {
            this.attachShadow({ mode: 'open' });
        }
        const feathers = FEATHERS.map(({ h, w, tips }) => tips.map(([x, y]) =>
            `M${x} ${y}q${-2 * w} ${h * 0.49} 0 ${h}q${2 * w} ${-h * 0.51} 0 ${-h}Z`).join('')).join('');
        this.shadowRoot.innerHTML = `
            <style>
                :host { position: relative; display: block; flex: 1; min-height: 0; background: #9ea2aa; border-top: 1px solid #93979f; overflow: hidden; }
                svg { position: absolute; left: 0; top: 0; width: 100%; height: 100%; }
                .label { position: absolute; left: 2px; top: 1px; display: flex; gap: 2px; height: 38px; background: #fff; }
                .label button { border: 0; padding: 0 8px; background: #1c558f; color: #fff; font: inherit; font-size: 24px; font-weight: bold; }
                .label .more::before { content: ""; display: block; width: 16px; height: 8px; background: #fff; clip-path: polygon(0 0, 100% 0, 50% 100%); }
            </style>
            <svg aria-hidden="true">
                <path d="${feathers}" transform="translate(0 -1)" fill="none" stroke="#000" stroke-width="1.5"/>
                <rect x="714.5" y="194.5" width="335" height="783" fill="none" stroke="#000" stroke-width="1.6"/>
                <path d="M72.5 1048V1107.5H132" fill="none" stroke="#5e5e5e" stroke-width="1.5"/>
                <text x="77" y="1046" font-size="26" fill="#5e5e5e">y</text>
                <text x="137" y="1109" font-size="26" fill="#5e5e5e">x</text>
            </svg>
            <div class="label">
                <button type="button">Top</button>
                <button type="button" class="more" aria-label="Viewport menu"></button>
            </div>
        `;
    }
}

class ViewTabs extends HTMLElement {
    connectedCallback() {
        if (!this.shadowRoot) {
            this.attachShadow({ mode: 'open' });
        }
        this.shadowRoot.innerHTML = `
            <style>
                :host { display: flex; align-items: center; height: 53px; padding-left: 20px; background: #f0f0f0; font-size: 25px; --size: 30px; }
                button { padding: 0; border: 0; background: none; font: inherit; color: var(--muted); }
                .icon { margin-right: 34px; }
                .icon + .icon { margin-right: 28px; }
                .view { display: flex; align-items: center; }
                .view::before { content: ""; width: 2px; height: 28px; background: #808080; }
                .view span { padding: 0 40px 4px 39px; }
                .view.on { color: var(--accent); }
            </style>
            <button type="button" class="icon" aria-label="Four views"><rhino-icon name="quad"></rhino-icon></button>
            <button type="button" class="icon" aria-label="Single view"><rhino-icon name="single"></rhino-icon></button>
            <button type="button" class="view"><span>Perspective</span></button>
            <button type="button" class="view on"><span>Top</span></button>
            <button type="button" class="view"><span>Front</span></button>
            <button type="button" class="view"><span>Right</span></button>
            <button type="button" class="view"><span>Layouts...</span></button>
        `;
    }
}

const LAYERS = [
    ['Default', 'lampOn', '#000'],
    ['Layer 01', 'lampOn', '#b8261b'],
    ['Layer 02', 'lampOn', '#7136c6'],
    ['New Design', 'lampOn', '#0023f5'],
    ['tests', 'lampOff', '#367c21'],
    ['Prototype', 'lampOn', '#141414'],
    ['GEAR CONNE', 'lampOn', '#7136c6'],
    ['Final Bird Fil', '', '#000']
];

class LayerTable extends HTMLElement {
    connectedCallback() {
        if (!this.shadowRoot) {
            this.attachShadow({ mode: 'open' });
        }
        const rows = LAYERS.map(([name, lamp, color]) => `
            <tr class="${lamp ? '' : 'current'}">
                <td></td>
                <td class="name">${name}</td>
                <td>${lamp ? '' : '<svg width="28" height="22" viewBox="0 0 28 22"><path d="M1 12L9 20L27 2" fill="none" stroke="#222" stroke-width="3"/></svg>'}</td>
                <td>${lamp ? `<rhino-icon name="${lamp}"></rhino-icon>` : ''}</td>
                <td>${lamp ? '<rhino-icon name="unlocked"></rhino-icon>' : ''}</td>
                <td><button type="button" class="swatch" style="background:${color}" aria-label="Layer colour"></button></td>
                <td><button type="button" class="material" aria-label="Material"></button></td>
            </tr>`).join('');
        this.shadowRoot.innerHTML = `
            <style>
                :host { display: block; flex: 1; overflow: hidden; background: #fff; --size: 28px; }
                table { width: 390px; table-layout: fixed; border-collapse: separate; border-spacing: 0; }
                th, td { box-sizing: border-box; padding: 0; text-align: left; vertical-align: middle; overflow: hidden; white-space: nowrap; }
                thead th { height: 56px; border-bottom: 2px solid #e5e5e5; font-weight: normal; }
                thead th span { display: block; height: 32px; line-height: 32px; padding-left: 4px; }
                thead th:nth-child(n + 3) span { border-left: 2px solid #e5e5e5; }
                tbody::before { content: ""; display: block; height: 9px; }
                td { height: 38px; }
                td:nth-child(n + 2) { border-bottom: 2px solid #e5e5e5; }
                tr:last-child td { border-bottom-color: #fff; }
                .name { padding-left: 4px; }
                .current .name { font-weight: bold; }
                td svg { display: block; margin-left: 8px; }
                td rhino-icon { margin: 0 auto; }
                button { display: block; box-sizing: border-box; padding: 0; }
                .swatch { width: 26px; height: 26px; margin: 0 auto; border: 2px solid #000; }
                .material { width: 32px; height: 32px; margin-left: 4px; border: 2px solid #808080; border-radius: 50%; background: #fff; }
            </style>
            <table>
                <colgroup><col style="width:50px"><col style="width:140px"><col style="width:40px"><col style="width:40px"><col style="width:40px"><col style="width:40px"><col style="width:40px"></colgroup>
                <thead>
                    <tr><th></th><th><span>Layer</span></th><th><span></span></th><th><span></span></th><th><span></span></th><th><span></span></th><th><span>Material</span></th></tr>
                </thead>
                <tbody>${rows}</tbody>
            </table>
        `;
    }
}

class LayersPanel extends HTMLElement {
    connectedCallback() {
        if (!this.shadowRoot) {
            this.attachShadow({ mode: 'open' });
        }
        const tools = ['newlayer', 'sublayer', 'remove', 'duplicate', 'up', 'down', 'left', 'funnel', 'grid', 'menu', 'help'];
        this.shadowRoot.innerHTML = `
            <style>
                :host { display: flex; flex-direction: column; min-height: 0; }
                .body { flex: 1; display: flex; min-height: 0; background: var(--panel); }
                .content { flex: 1; min-width: 0; display: flex; flex-direction: column; padding: 16px 24px 16px 16px; }
                button { display: grid; place-items: center; padding: 0; border: 0; background: none; }
                .tools { display: grid; grid-template-columns: repeat(8, 44px); grid-auto-rows: 44px; --size: 30px; }
                .tools button:last-child { --size: 36px; }
                .search {
                    display: flex;
                    align-items: center;
                    gap: 14px;
                    box-sizing: border-box;
                    height: 42px;
                    margin: 12px 2px 11px;
                    padding: 0 13px;
                    border: 1px solid #d6d6d6;
                    border-bottom: 2px solid #b9b9b9;
                    border-radius: 10px;
                    background: #fff;
                    --size: 26px;
                }
                input { flex: 1; min-width: 0; padding: 0; border: 0; font: inherit; font-size: 25px; background: none; }
                input::placeholder { color: #bdbdbd; }
                .side { width: 40px; display: flex; flex-direction: column; --size: 30px; background: var(--panel); }
                .side button { width: 40px; height: 72px; }
                .above { background: var(--chrome); border-bottom-left-radius: 12px; --size: 32px; }
                .on { background: var(--chrome); }
                .on button { background: var(--panel); border-radius: 0 12px 12px 0; --size: 30px; }
                .below { flex: 1; background: var(--chrome); border-top-left-radius: 12px; }
            </style>
            <panel-header>Layers</panel-header>
            <div class="body">
                <div class="content">
                    <div class="tools">${tools.map(t => `<button type="button" aria-label="${t}"><rhino-icon name="${t}"></rhino-icon></button>`).join('')}</div>
                    <label class="search"><rhino-icon name="find"></rhino-icon><input type="text" placeholder="Search" aria-label="Search"></label>
                    <layer-table></layer-table>
                </div>
                <div class="side">
                    <div class="above"><button type="button" aria-label="Colour"><rhino-icon name="color"></rhino-icon></button></div>
                    <div class="on"><button type="button" aria-label="Layers"><rhino-icon name="layers"></rhino-icon></button></div>
                    <div class="below">
                        <button type="button" aria-label="Display"><rhino-icon name="display"></rhino-icon></button>
                        <button type="button" aria-label="Help"><rhino-icon name="helpwin"></rhino-icon></button>
                    </div>
                </div>
            </div>
        `;
    }
}

class StatusBar extends HTMLElement {
    connectedCallback() {
        if (!this.shadowRoot) {
            this.attachShadow({ mode: 'open' });
        }
        this.shadowRoot.innerHTML = `
            <style>
                :host { display: flex; overflow: hidden; background: #fff; line-height: 10px; white-space: pre; }
                .handle { width: 38px; border-right: 2px solid var(--chrome); border-top-left-radius: 12px; background: var(--panel); }
                .what { width: 320px; padding-left: 10px; }
                .at { width: 400px; }
            </style>
            <div class="handle"></div><span class="what">World angles and deltas:</span><span class="at">xy = 0.000  elevation = 0.000</span><span>dx = 240.000  dy = 0.000  dz = 0.000</span>
        `;
    }
}

class RhinoApp extends HTMLElement {
    connectedCallback() {
        if (!this.shadowRoot) {
            this.attachShadow({ mode: 'open' });
        }
        this.shadowRoot.innerHTML = `
            <style>
                :host {
                    display: grid;
                    grid-template-rows: auto auto 1fr 6px;
                    height: 100vh;
                    overflow: hidden;
                    border-top-right-radius: 16px;
                    background: var(--chrome);
                }
                main { display: grid; grid-template-columns: 252px 1fr 460px; gap: 6px; padding: 6px 6px 6px 0; min-height: 0; }
                .left, .view { display: flex; flex-direction: column; min-height: 0; min-width: 0; }
                .left { gap: 6px; overflow: hidden; }
            </style>
            <title-bar>FusionOrnithopter.3dm</title-bar>
            <tabbed-toolbar></tabbed-toolbar>
            <main>
                <div class="left">
                    <tool-palette></tool-palette>
                    <osnap-panel></osnap-panel>
                </div>
                <div class="view">
                    <model-viewport></model-viewport>
                    <view-tabs></view-tabs>
                </div>
                <layers-panel></layers-panel>
            </main>
            <status-bar></status-bar>
        `;
    }
}

customElements.define('rhino-icon', RhinoIcon);
customElements.define('tool-button', ToolButton);
customElements.define('title-bar', TitleBar);
customElements.define('tabbed-toolbar', TabbedToolbar);
customElements.define('tool-palette', ToolPalette);
customElements.define('panel-header', PanelHeader);
customElements.define('snap-option', SnapOption);
customElements.define('osnap-panel', OsnapPanel);
customElements.define('model-viewport', ModelViewport);
customElements.define('view-tabs', ViewTabs);
customElements.define('layer-table', LayerTable);
customElements.define('layers-panel', LayersPanel);
customElements.define('status-bar', StatusBar);
customElements.define('rhino-app', RhinoApp);
</script>
</body>
</html>
